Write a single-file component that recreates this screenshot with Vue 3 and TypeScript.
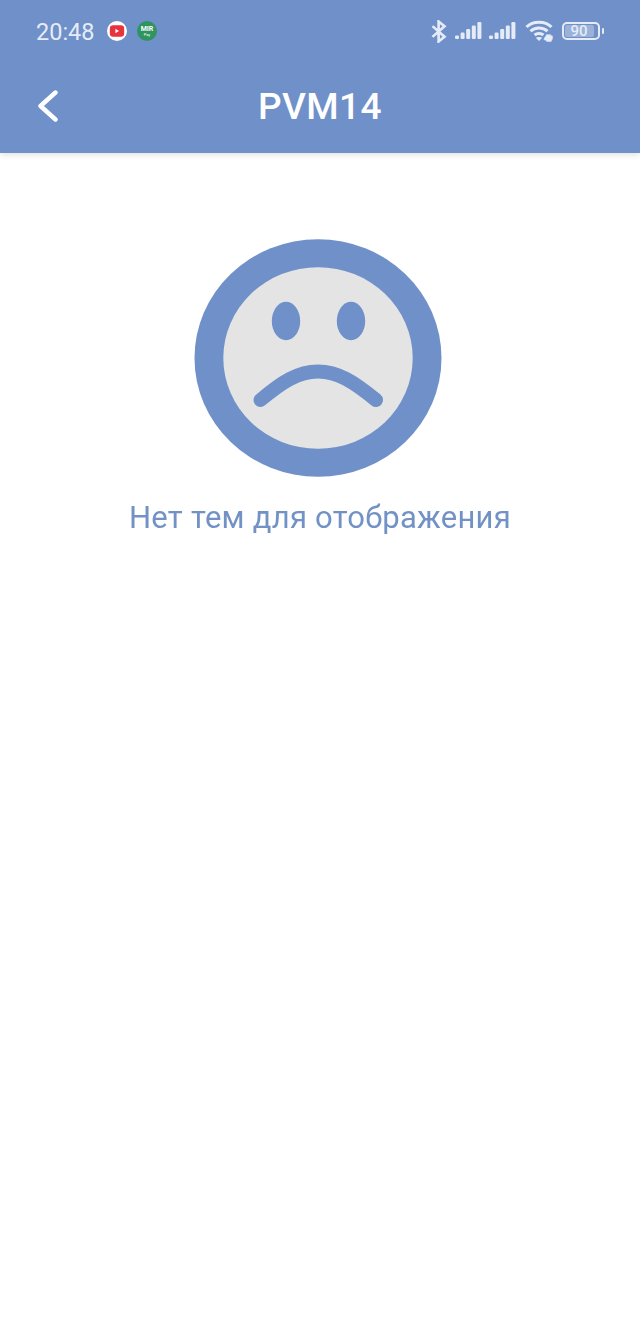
<script setup lang="ts">
const title = 'PVM14'
const message = 'Нет тем для отображения'
const signalBars = [
  { x: 0, h: 3.5 },
  { x: 5.6, h: 6.5 },
  { x: 11.2, h: 10 },
  { x: 16.8, h: 13.5 },
  { x: 22.4, h: 17 },
]
</script>

<template>
  <div class="screen">
    <header class="header">
      <div class="status-bar">
        <div class="status-left">
          <span class="clock">20:48</span>
          <svg class="app-badge" viewBox="0 0 21 21">
            <circle cx="10.5" cy="10.5" r="10.5" fill="#fff" />
            <rect x="3" y="4.5" width="15" height="12" rx="3.5" fill="#e8323c" />
            <path d="M8.8 8.2 L12.6 10.5 L8.8 12.8 Z" fill="#fff" />
          </svg>
          <div class="mir-badge">
            <span class="mir-top">MIR</span>
            <span class="mir-bottom">Pay</span>
          </div>
        </div>
        <div class="status-right">
          <svg class="bt" viewBox="0 0 15 21" fill="none" stroke="#e6ecf7" stroke-width="2.4">
            <path d="M2 5.6 L13 15.2 L7.6 19.6 V1.4 L13 5.8 L2 15.4" />
          </svg>
          <svg v-for="n in 2" :key="n" class="signal" viewBox="0 0 27 18">
            <rect
              v-for="bar in signalBars"
              :key="bar.x"
              :x="bar.x"
              :y="17 - bar.h"
              width="4"
              :height="bar.h"
              rx="1.2"
              fill="#e6ecf7"
            />
          </svg>
          <svg class="wifi" viewBox="0 0 28 24" fill="none" stroke="#e6ecf7" stroke-width="3">
            <path d="M1.5 8 C8 1.5 20 1.5 26.5 8" />
            <path d="M5.5 12.2 C10 7.8 18 7.8 22.5 12.2" />
            <path d="M9.6 16 C12 14 16 14 18.4 16" />
            <path d="M14 22 L10.8 18.8 C12.6 17.6 15.4 17.6 17.2 18.8 Z" fill="#e6ecf7" stroke="none" />
            <text x="20.5" y="21" class="wifi-label">4r</text>
          </svg>
          <div class="battery">
            <div class="battery-body"><span class="battery-level">90</span></div>
            <div class="battery-tip"></div>
          </div>
        </div>
      </div>
      <div class="toolbar">
        <svg class="back" viewBox="0 0 22 32" fill="none" stroke="#fff" stroke-width="4.4" stroke-linecap="round" stroke-linejoin="round">
          <path d="M18.5 2.5 L3.5 16 L18.5 29.5" />
        </svg>
        <h1 class="title">{{ title }}</h1>
      </div>
    </header>

    <main class="content">
      <svg class="sad-face" viewBox="0 0 248 238">
        <ellipse cx="124" cy="119" rx="123.5" ry="118.7" fill="#6f90c8" />
        <ellipse cx="124" cy="119" rx="94.7" ry="90.8" fill="#e4e4e4" />
        <ellipse cx="92" cy="82" rx="14.2" ry="19.2" fill="#6f90c8" />
        <ellipse cx="157" cy="82" rx="14.2" ry="19.2" fill="#6f90c8" />
        <path
          d="M66.5 161 C88 143 104 132.5 124 132.5 C144 132.5 160 143 182 161"
          fill="none"
          stroke="#6f90c8"
          stroke-width="14"
          stroke-linecap="round"
        />
      </svg>
      <p class="message">{{ message }}</p>
    </main>
  </div>
</template>

<style>
html,
body {
  margin: 0;
  background: #fff;
}
</style>

<style scoped>
.screen {
  width: 640px;
  height: 1329px;
  display: flex;
  flex-direction: column;
  background: #fff;
  font-family: Roboto, 'Noto Sans', sans-serif;
  overflow: hidden;
}

.header {
  height: 153px;
  flex-shrink: 0;
  background: #6f90c8;
  box-shadow: 0 2px 6px rgba(0, 0, 0, 0.12);
  display: flex;
  flex-direction: column;
}

.status-bar {
  height: 62px;
  padding: 0 36px;
  display: flex;
  align-items: center;
  justify-content: space-between;
}

.status-left,
.status-right {
  display: flex;
  align-items: center;
}

.clock {
  width: 59px;
  margin-top: 2px;
  margin-right: 12px;
  color: #e6ecf7;
  font-size: 23.5px;
  line-height: 28px;
}

.app-badge {
  width: 20px;
  height: 20px;
  margin-right: 10px;
}

.mir-badge {
  width: 20px;
  height: 20px;
  border-radius: 50%;
  background: #2f9460;
  color: #fff;
  display: flex;
  flex-direction: column;
  align-items: center;
  justify-content: center;
  line-height: 1;
}

.mir-top {
  font-size: 7px;
  font-weight: 700;
}

.mir-bottom {
  font-size: 4px;
}

.bt {
  width: 17px;
  height: 23px;
  margin-right: 8px;
}

.signal {
  width: 27px;
  height: 18px;
  margin-right: 7px;
}

.wifi {
  width: 28px;
  height: 24px;
  margin-left: 2px;
  margin-right: 9px;
}

.wifi-label {
  font-size: 6px;
  font-weight: 500;
  fill: #e6ecf7;
}

.battery {
  display: flex;
  align-items: center;
}

.battery-body {
  width: 38px;
  height: 18px;
  border: 2px solid #e6ecf7;
  border-radius: 5px;
  padding: 1px;
  box-sizing: border-box;
}

.battery-level {
  display: block;
  width: 29px;
  height: 100%;
  border-radius: 2px;
  background: rgba(255, 255, 255, 0.3);
  color: #e6ecf7;
  font-size: 15px;
  font-weight: 500;
  line-height: 12px;
  text-align: center;
}

.battery-tip {
  width: 2.5px;
  height: 6px;
  margin-left: 2px;
  border-radius: 1px;
  background: #e6ecf7;
}

.toolbar {
  position: relative;
  height: 85px;
  display: flex;
  align-items: flex-start;
  justify-content: center;
}

.back {
  position: absolute;
  left: 37px;
  top: 28px;
  width: 22px;
  height: 32px;
}

.title {
  margin: 23px 0 0;
  color: #fff;
  font-size: 37px;
  font-weight: 500;
  line-height: 44px;
  letter-spacing: 0.4px;
}

.content {
  flex: 1;
  padding-top: 86px;
  display: flex;
  flex-direction: column;
  align-items: center;
}

.sad-face {
  width: 248px;
  height: 238px;
  margin-left: -4px;
}

.message {
  margin: 22px 0 0;
  color: #7292c6;
  font-size: 31px;
  line-height: 38px;
  letter-spacing: 0.25px;
  will-change: opacity;
}
</style>
